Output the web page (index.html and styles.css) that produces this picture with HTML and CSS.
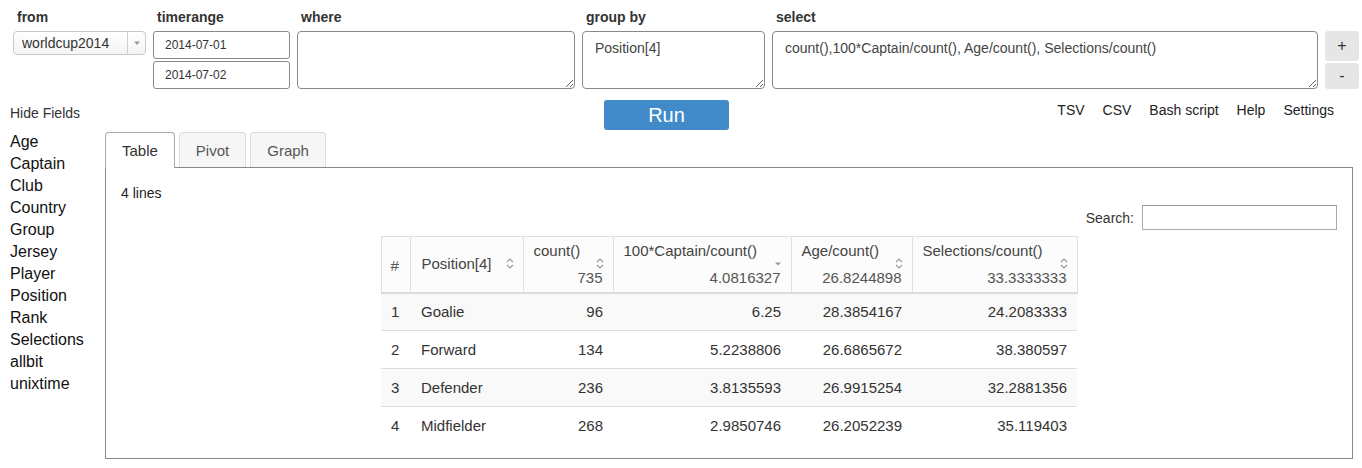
FILE: index.html
```html
<!DOCTYPE html>
<html>
<head>
<meta charset="utf-8">
<link rel="stylesheet" href="styles.css">
</head>
<body>
<div class="top">
  <div class="col col-from">
    <div class="lbl">from</div>
    <div class="dropdown"><span class="dd-text">worldcup2014</span><span class="dd-arrow"><svg width="8" height="6" viewBox="0 0 8 6"><path d="M1 1.5 L7 1.5 L4 5 Z" fill="#999"/></svg></span></div>
  </div>
  <div class="col col-time">
    <div class="lbl">timerange</div>
    <div class="inp">2014-07-01</div>
    <div class="inp inp2">2014-07-02</div>
  </div>
  <div class="col col-where">
    <div class="lbl">where</div>
    <textarea class="ta"></textarea>
  </div>
  <div class="col col-group">
    <div class="lbl">group by</div>
    <textarea class="ta">Position[4]</textarea>
  </div>
  <div class="col col-select">
    <div class="lbl">select</div>
    <textarea class="ta">count(),100*Captain/count(), Age/count(), Selections/count()</textarea>
  </div>
  <div class="col col-btns">
    <div class="sqbtn plus">+</div>
    <div class="sqbtn minus">-</div>
  </div>
</div>

<div class="row2">
  <div class="hide">Hide Fields</div>
  <div class="run">Run</div>
  <div class="links"><span>TSV</span><span>CSV</span><span>Bash script</span><span>Help</span><span>Settings</span></div>
</div>

<div class="main">
  <ul class="fields">
    <li>Age</li><li>Captain</li><li>Club</li><li>Country</li><li>Group</li><li>Jersey</li><li>Player</li><li>Position</li><li>Rank</li><li>Selections</li><li>allbit</li><li>unixtime</li>
  </ul>
  <div class="panelwrap">
    <div class="tabs">
      <div class="tab active">Table</div>
      <div class="tab">Pivot</div>
      <div class="tab">Graph</div>
    </div>
    <div class="panel">
      <div class="lines">4 lines</div>
      <div class="search"><span>Search:</span><div class="sinput"></div></div>
      <table class="data">
        <colgroup><col class="c0"><col class="c1"><col class="c2"><col class="c3"><col class="c4"><col class="c5"></colgroup>
        <thead>
          <tr>
            <th class="hash">#</th>
            <th class="pos">Position[4]<span class="si"><svg width="8" height="11" viewBox="0 0 8 11"><path d="M1 4 L4 1 L7 4 M1 7 L4 10 L7 7" fill="none" stroke="#999" stroke-width="1.1"/></svg></span></th>
            <th class="num"><div class="hl">count()</div><div class="hv">735</div><span class="si si2"><svg width="8" height="11" viewBox="0 0 8 11"><path d="M1 4 L4 1 L7 4 M1 7 L4 10 L7 7" fill="none" stroke="#999" stroke-width="1.1"/></svg></span></th>
            <th class="num"><div class="hl">100*Captain/count()</div><div class="hv">4.0816327</div><span class="si si2"><svg width="8" height="11" viewBox="0 0 8 11"><path d="M1 4.5 L7 4.5 L4 7.5 Z" fill="#999"/></svg></span></th>
            <th class="num"><div class="hl">Age/count()</div><div class="hv">26.8244898</div><span class="si si2"><svg width="8" height="11" viewBox="0 0 8 11"><path d="M1 4 L4 1 L7 4 M1 7 L4 10 L7 7" fill="none" stroke="#999" stroke-width="1.1"/></svg></span></th>
            <th class="num"><div class="hl">Selections/count()</div><div class="hv">33.3333333</div><span class="si si2"><svg width="8" height="11" viewBox="0 0 8 11"><path d="M1 4 L4 1 L7 4 M1 7 L4 10 L7 7" fill="none" stroke="#999" stroke-width="1.1"/></svg></span></th>
          </tr>
        </thead>
        <tbody>
          <tr class="odd"><td>1</td><td>Goalie</td><td class="r">96</td><td class="r">6.25</td><td class="r">28.3854167</td><td class="r">24.2083333</td></tr>
          <tr><td>2</td><td>Forward</td><td class="r">134</td><td class="r">5.2238806</td><td class="r">26.6865672</td><td class="r">38.380597</td></tr>
          <tr class="odd"><td>3</td><td>Defender</td><td class="r">236</td><td class="r">3.8135593</td><td class="r">26.9915254</td><td class="r">32.2881356</td></tr>
          <tr class="last"><td>4</td><td>Midfielder</td><td class="r">268</td><td class="r">2.9850746</td><td class="r">26.2052239</td><td class="r">35.119403</td></tr>
        </tbody>
      </table>
    </div>
  </div>
</div>
</body>
</html>
```

FILE: styles.css
```css
* { box-sizing: border-box; }
html, body { margin: 0; padding: 0; background: #fff; }
body {
  font-family: "Liberation Sans", Arial, sans-serif;
  color: #333;
  width: 1362px;
  height: 468px;
  overflow: hidden;
}

.top {
  display: flex;
  gap: 7px;
  padding: 9px 0 0 13px;
}
.col { display: flex; flex-direction: column; }
.lbl {
  font-weight: bold;
  font-size: 14px;
  line-height: 16px;
  height: 22px;
  padding-left: 4px;
  color: #333;
}
.col-from { width: 133px; }
.col-time { width: 137px; }
.col-where { width: 278px; }
.col-group { width: 183px; }
.col-select { width: 546px; }
.col-btns { width: 34px; padding-top: 22px; gap: 2px; }

.dropdown {
  height: 24px;
  border: 1px solid #c8c8c8;
  border-radius: 4px;
  background: linear-gradient(#ffffff, #f4f4f4);
  display: flex;
  align-items: center;
  font-size: 14px;
}
.dd-text { flex: 1; padding-left: 8px; color: #333; }
.dd-arrow {
  width: 18px;
  height: 100%;
  border-left: 1px solid #d0d0d0;
  display: flex;
  align-items: center;
  justify-content: center;
}

.inp {
  height: 28px;
  border: 1px solid #8a8a8a;
  border-radius: 3px;
  font-size: 12px;
  line-height: 26px;
  padding-left: 11px;
  color: #333;
}
.inp2 { margin-top: 2px; }

.ta {
  height: 58px;
  width: 100%;
  border: 1px solid #8a8a8a;
  border-radius: 4px;
  font-family: "Liberation Sans", Arial, sans-serif;
  font-size: 14px;
  color: #444;
  padding: 8px 12px;
  margin: 0;
  resize: both;
  outline: none;
}

.sqbtn {
  background: #e6e6e6;
  border-radius: 3px;
  text-align: center;
  font-size: 16px;
  color: #333;
}
.plus { height: 30px; line-height: 30px; }
.minus { height: 26px; line-height: 26px; }

.row2 {
  display: flex;
  align-items: flex-start;
  padding: 0 0 0 10px;
  margin-top: 11px;
  height: 30px;
}
.hide {
  font-size: 14px;
  line-height: 16px;
  margin-top: 5px;
  width: 594px;
}
.run {
  width: 125px;
  height: 30px;
  background: #428bca;
  border-radius: 3px;
  color: #fff;
  font-size: 20px;
  line-height: 30px;
  text-align: center;
}
.links {
  margin-left: auto;
  margin-right: 28px;
  display: flex;
  gap: 18px;
  font-size: 14px;
  line-height: 16px;
  margin-top: 2px;
  color: #222;
}

.main {
  display: flex;
  padding-left: 10px;
}
.fields {
  list-style: none;
  margin: 0;
  padding: 1px 0 0 0;
  width: 95px;
  font-size: 16px;
  line-height: 22px;
  color: #111;
}
.panelwrap { width: 1248px; padding-top: 2px; }
.tabs { display: flex; gap: 4px; height: 35px; }
.tab {
  height: 35px;
  padding: 0 16px;
  font-size: 15px;
  line-height: 36px;
  color: #555;
  background: #f6f6f6;
  border: 1px solid #ddd;
  border-bottom: none;
  border-radius: 4px 4px 0 0;
}
.tab.active {
  color: #333;
  background: #fff;
  border-color: #aaa;
  height: 36px;
  position: relative;
  z-index: 1;
}
.panel {
  border: 1px solid #888;
  height: 292px;
  padding: 17px 15px 0 15px;
}
.lines { font-size: 14px; line-height: 16px; color: #222; }
.search {
  display: flex;
  justify-content: flex-end;
  align-items: center;
  gap: 8px;
  margin-top: 4px;
  font-size: 14px;
  color: #333;
}
.sinput {
  width: 195px;
  height: 25px;
  border: 1px solid #aaa;
  border-top-color: #999;
}

.data {
  border-collapse: collapse;
  table-layout: fixed;
  width: 696px;
  margin: 6px auto 0 auto;
  font-size: 15px;
  color: #333;
}
.c0 { width: 29px; }
.c1 { width: 113px; }
.c2 { width: 90px; }
.c3 { width: 178px; }
.c4 { width: 121px; }
.c5 { width: 165px; }
.data th {
  position: relative;
  height: 56px;
  border: 1px solid #e0e0e0;
  border-bottom: 2px solid #dcdcdc;
  font-weight: normal;
  text-align: left;
  padding: 5px 10px 4px 10px;
  color: #444;
  background: #fcfcfc;
  vertical-align: middle;
}
.data th.hash { color: #555; padding-left: 9px; padding-top: 7px; }
.data th.pos { padding-left: 11px; padding-top: 2px; }
.data th.num { vertical-align: top; }
.hl { line-height: 18px; }
.hv { text-align: right; line-height: 18px; margin-top: 9px; color: #555; }
.si { position: absolute; right: 9px; top: 21px; line-height: 0; }
.si2 { top: 21px; }
.data td {
  height: 38px;
  padding: 0 10px;
  border-top: 1px solid #ddd;
  white-space: nowrap;
}
.data td:nth-child(2) { padding-left: 11px; }
.data td.r { text-align: right; }
.data tr.odd td { background: #f9f9f9; }
```
